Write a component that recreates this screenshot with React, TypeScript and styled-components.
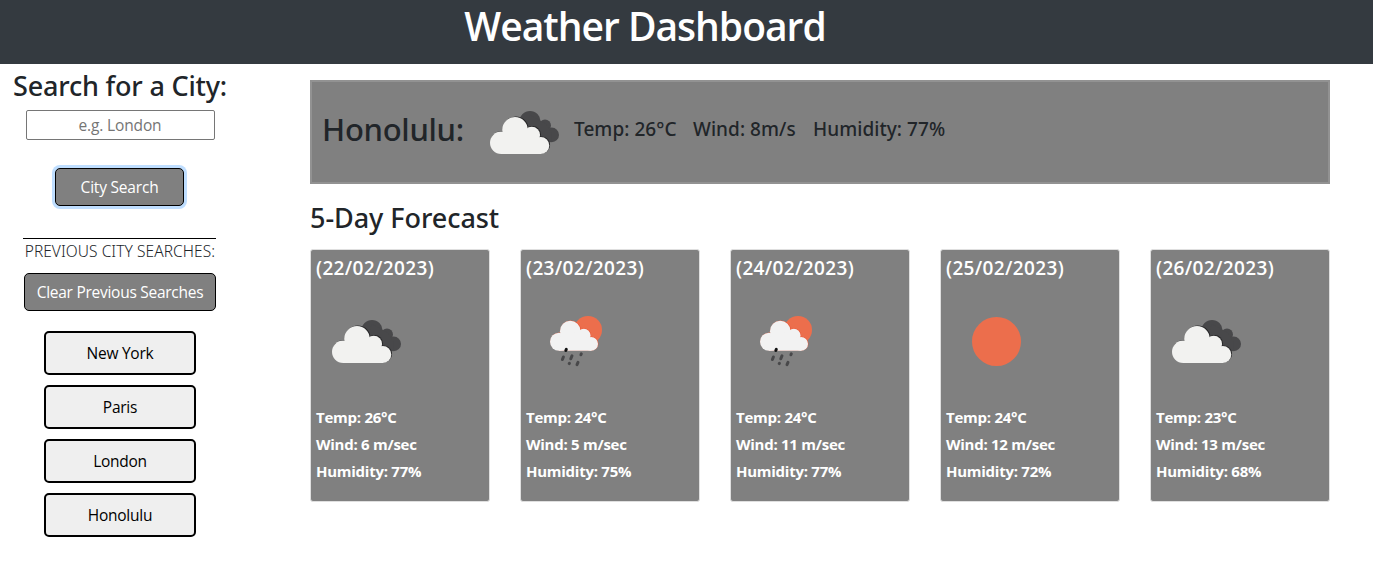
import React from "react";
import styled, { createGlobalStyle } from "styled-components";

const GlobalStyle = createGlobalStyle`
  *, *::before, *::after { box-sizing: border-box; }
  body {
    margin: 0;
    background: #fff;
    color: #212529;
    font-family: "Segoe UI", "Open Sans", "Noto Sans", sans-serif;
    font-size: 16px;
    line-height: 1.5;
    overflow: hidden;
  }
  h1, h2, h3, h4, p { margin: 0; white-space: nowrap; }
  h2, h3 { font-family: "Segoe UI", "Noto Sans", sans-serif; }
  button, input { font-family: inherit; }
`;

const Header = styled.header`
  height: 64px;
  padding: 2px 83px 0 0;
  background: #343a40;
  display: flex;
  justify-content: center;
`;

const Title = styled.h1`
  color: #fff;
  font-size: 39px;
  font-weight: 600;
  line-height: 48px;
  letter-spacing: -1px;
`;

const Layout = styled.div`
  display: flex;
  align-items: flex-start;
`;

const Sidebar = styled.aside`
  width: 240px;
  padding-top: 5px;
  display: flex;
  flex-direction: column;
  align-items: center;
`;

const SearchHeading = styled.h2`
  font-size: 27px;
  font-weight: 500;
  line-height: 34px;
  letter-spacing: -0.18px;
`;

const CityInput = styled.input`
  width: 189px;
  height: 30px;
  margin-top: 7px;
  padding: 1px 2px;
  border: 1px solid #767676;
  border-radius: 2px;
  background: #fff;
  text-align: center;
  font-size: 15.5px;
  letter-spacing: -0.15px;
  &::placeholder { color: #757575; opacity: 1; }
`;

const ActionButton = styled.button<{ $width: number; $focused?: boolean }>`
  width: ${(p) => p.$width}px;
  height: 38px;
  padding: 0;
  border: 1px solid #000;
  border-radius: 5px;
  background: #808080;
  color: #fff;
  font-size: 15.5px;
  line-height: 24px;
  letter-spacing: ${(p) => (p.$focused ? "-0.2px" : "-0.27px")};
  white-space: nowrap;
  box-shadow: ${(p) => (p.$focused ? "0 0 0 3px #bfdeff" : "none")};
`;

const SearchArea = styled.div`
  padding: 28px 1px 32px 0;
`;

const History = styled.section`
  width: 193px;
  margin-right: 1px;
  border-top: 1px solid #000;
  display: flex;
  flex-direction: column;
  align-items: flex-end;
`;

const HistoryLabel = styled.p`
  margin: 0 1px 9px 0;
  font-family: "Segoe UI", "Noto Sans", sans-serif;
  font-size: 15.5px;
  font-weight: 300;
  line-height: 25px;
  letter-spacing: 0.06px;
`;

const CityList = styled.div`
  display: flex;
  flex-direction: column;
  gap: 10px;
  margin: 20px 20px 0 0;
`;

const CityButton = styled.button`
  width: 152px;
  height: 44px;
  padding: 0;
  border: 2px solid #000;
  border-radius: 5px;
  background: #efefef;
  color: #000;
  font-size: 15.5px;
  letter-spacing: -0.25px;
`;

const Main = styled.main`
  width: 1020px;
  margin-left: 70px;
  padding-top: 16px;
`;

const Current = styled.section`
  height: 104px;
  padding: 0 0 6px 10px;
  border: 2px solid #929292;
  background: #808080;
  display: flex;
  align-items: center;
`;

const CityName = styled.h2`
  width: 168px;
  font-size: 31px;
  font-weight: 500;
  line-height: 40px;
  letter-spacing: -0.3px;
`;

const Readings = styled.div`
  display: flex;
  margin-left: 14px;
`;

const Reading = styled.h3<{ $width: number }>`
  width: ${(p) => p.$width}px;
  font-size: 19px;
  font-weight: 500;
  line-height: 24px;
  letter-spacing: 0.05px;
`;

const ForecastHeading = styled.h3`
  margin-top: 17px;
  font-size: 27px;
  font-weight: 500;
  line-height: 34px;
  letter-spacing: -0.05px;
`;

const Cards = styled.div`
  display: flex;
  gap: 30px;
  margin-top: 14px;
`;

const Card = styled.article`
  width: 180px;
  height: 253px;
  padding: 6px 5px;
  border: 1px solid #dfdfdf;
  border-radius: 3px;
  background: #808080;
  color: #fff;
`;

const CardDate = styled.h4`
  font-size: 19px;
  font-weight: 600;
  line-height: 24px;
  letter-spacing: 0.35px;
`;

const IconSlot = styled.div`
  height: 124px;
  padding-top: 12px;
`;

const CardLine = styled.p`
  font-size: 15px;
  font-weight: 700;
  line-height: 27px;
  letter-spacing: -0.26px;
`;

const Svg = styled.svg`
  display: block;
  flex: none;
`;

const CurrentIcon = styled(Svg)`
  margin-top: 8px;
`;

const FrontCloud = () => (
  <>
    <circle cx="11.2" cy="31.8" r="11.2" />
    <circle cx="25" cy="18.7" r="12.7" />
    <circle cx="41.8" cy="24" r="8.3" />
    <circle cx="50.8" cy="34.5" r="8.5" />
    <path d="M11 43V27L25 20L42 22L51 34V43Z" />
  </>
);

const CloudDrawing = () => (
  <>
    <g fill="#48484a">
      <circle cx="40" cy="10.6" r="10.6" />
      <circle cx="55" cy="14.5" r="6" />
      <circle cx="61.7" cy="23.9" r="7.3" />
      <path d="M40 4L56 13L62 23L61 31.2L48 28L35 18Z" />
    </g>
    <g fill="#252526" transform="translate(.8 -.6)"><FrontCloud /></g>
    <g fill="#f2f2f0"><FrontCloud /></g>
  </>
);

type Kind = "cloud" | "rain" | "sun";

const WeatherIcon = ({ kind }: { kind: Kind }) => (
  <Svg width="100" height="100" viewBox="0 0 100 100">
    {kind === "cloud" && (
      <g transform="translate(16 28)"><CloudDrawing /></g>
    )}
    {kind === "rain" && (
      <>
        <circle cx="62" cy="38" r="14" fill="#ec6e4c" />
        <g transform="translate(24.4 23.7) scale(.81)" fill="#e94d2c"><FrontCloud /></g>
        <g transform="translate(24 24) scale(.81)" fill="#f2f2f2"><FrontCloud /></g>
        <g stroke="#48484a" strokeWidth="3" strokeLinecap="round">
          <path stroke="#111" d="M40.3 57.4L39.8 58.5" />
          <path d="M37.4 65L36.4 67.5M46 63.8L44.8 66.8M55.3 61.8L54.9 62.8M43.4 71.3L43.2 71.6M52 70.3L51 72.6" />
        </g>
      </>
    )}
    {kind === "sun" && <circle cx="50.5" cy="49.5" r="24.5" fill="#ec6e4c" />}
  </Svg>
);

const cities = ["New York", "Paris", "London", "Honolulu"];

const days: { date: string; kind: Kind; temp: number; wind: number; humidity: number }[] = [
  { date: "22/02/2023", kind: "cloud", temp: 26, wind: 6, humidity: 77 },
  { date: "23/02/2023", kind: "rain", temp: 24, wind: 5, humidity: 75 },
  { date: "24/02/2023", kind: "rain", temp: 24, wind: 11, humidity: 77 },
  { date: "25/02/2023", kind: "sun", temp: 24, wind: 12, humidity: 72 },
  { date: "26/02/2023", kind: "cloud", temp: 23, wind: 13, humidity: 68 },
];

export default function App() {
  return (
    <>
      <GlobalStyle />
      <Header><Title>Weather Dashboard</Title></Header>
      <Layout>
        <Sidebar>
          <SearchHeading>Search for a City:</SearchHeading>
          <CityInput placeholder="e.g. London" />
          <SearchArea>
            <ActionButton $width={129} $focused>City Search</ActionButton>
          </SearchArea>
          <History>
            <HistoryLabel>PREVIOUS CITY SEARCHES:</HistoryLabel>
            <ActionButton $width={192}>Clear Previous Searches</ActionButton>
            <CityList>
              {cities.map((c) => <CityButton key={c}>{c}</CityButton>)}
            </CityList>
          </History>
        </Sidebar>
        <Main>
          <Current>
            <CityName>Honolulu:</CityName>
            <CurrentIcon width="70" height="44" viewBox="0 0 70 44"><CloudDrawing /></CurrentIcon>
            <Readings>
              <Reading $width={119}>Temp: 26°C</Reading>
              <Reading $width={120}>Wind: 8m/s</Reading>
              <Reading $width={140}>Humidity: 77%</Reading>
            </Readings>
          </Current>
          <ForecastHeading>5-Day Forecast</ForecastHeading>
          <Cards>
            {days.map((d) => (
              <Card key={d.date}>
                <CardDate>({d.date})</CardDate>
                <IconSlot><WeatherIcon kind={d.kind} /></IconSlot>
                <CardLine>Temp: {d.temp}°C</CardLine>
                <CardLine>Wind: {d.wind} m/sec</CardLine>
                <CardLine>Humidity: {d.humidity}%</CardLine>
              </Card>
            ))}
          </Cards>
        </Main>
      </Layout>
    </>
  );
}
